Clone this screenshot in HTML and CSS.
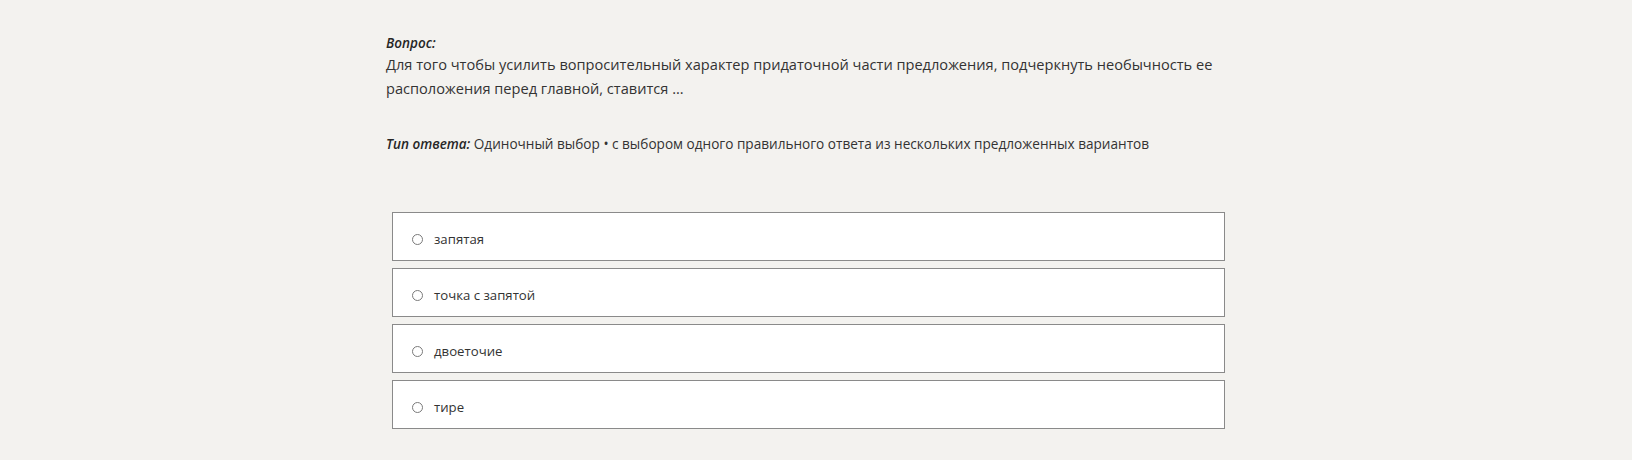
FILE: index.html
```html
<!DOCTYPE html>
<html lang="ru">
<head>
<meta charset="utf-8">
<title>Вопрос</title>
<link rel="stylesheet" href="styles.css">
</head>
<body>
<main class="page">
  <section class="question">
    <div class="label">Вопрос:</div>
    <p class="question-text">Для того чтобы усилить вопросительный характер придаточной части предложения, подчеркнуть необычность ее расположения перед главной, ставится ...</p>
  </section>
  <div class="type"><span class="label">Тип ответа:</span> Одиночный выбор • с выбором одного правильного ответа из нескольких предложенных вариантов</div>
  <ul class="options">
    <li class="option"><span class="radio"></span><span class="option-text">запятая</span></li>
    <li class="option"><span class="radio"></span><span class="option-text">точка с запятой</span></li>
    <li class="option"><span class="radio"></span><span class="option-text">двоеточие</span></li>
    <li class="option"><span class="radio"></span><span class="option-text">тире</span></li>
  </ul>
</main>
</body>
</html>
```

FILE: styles.css
```css
html, body {
  margin: 0;
  padding: 0;
  background: #f3f2ef;
}
body {
  font-family: "Open Sans", "Noto Sans", "Liberation Sans", sans-serif;
  color: #333;
}
.page {
  padding: 33px 0 0 386px;
}
.label {
  font-weight: 600;
  font-style: italic;
  font-size: 13.5px;
  line-height: 20px;
  color: #262626;
}
.question-text {
  margin: 0;
  width: 850px;
  font-size: 14.6px;
  line-height: 23.5px;
}
.type {
  margin-top: 34px;
  font-size: 13.6px;
  line-height: 20px;
}
.options {
  list-style: none;
  margin: 58px 0 0 6px;
  padding: 0;
  width: 833px;
  display: flex;
  flex-direction: column;
  gap: 7px;
}
.option {
  box-sizing: border-box;
  height: 49px;
  background: #fff;
  border: 1px solid #8a8a8a;
  display: flex;
  align-items: center;
  padding: 5px 0 0 19px;
  gap: 11px;
}
.radio {
  box-sizing: border-box;
  width: 11px;
  height: 11px;
  border: 1px solid #7a7a7a;
  border-radius: 50%;
  background: #fff;
}
.option-text {
  font-size: 13.2px;
  line-height: 20px;
}
```
